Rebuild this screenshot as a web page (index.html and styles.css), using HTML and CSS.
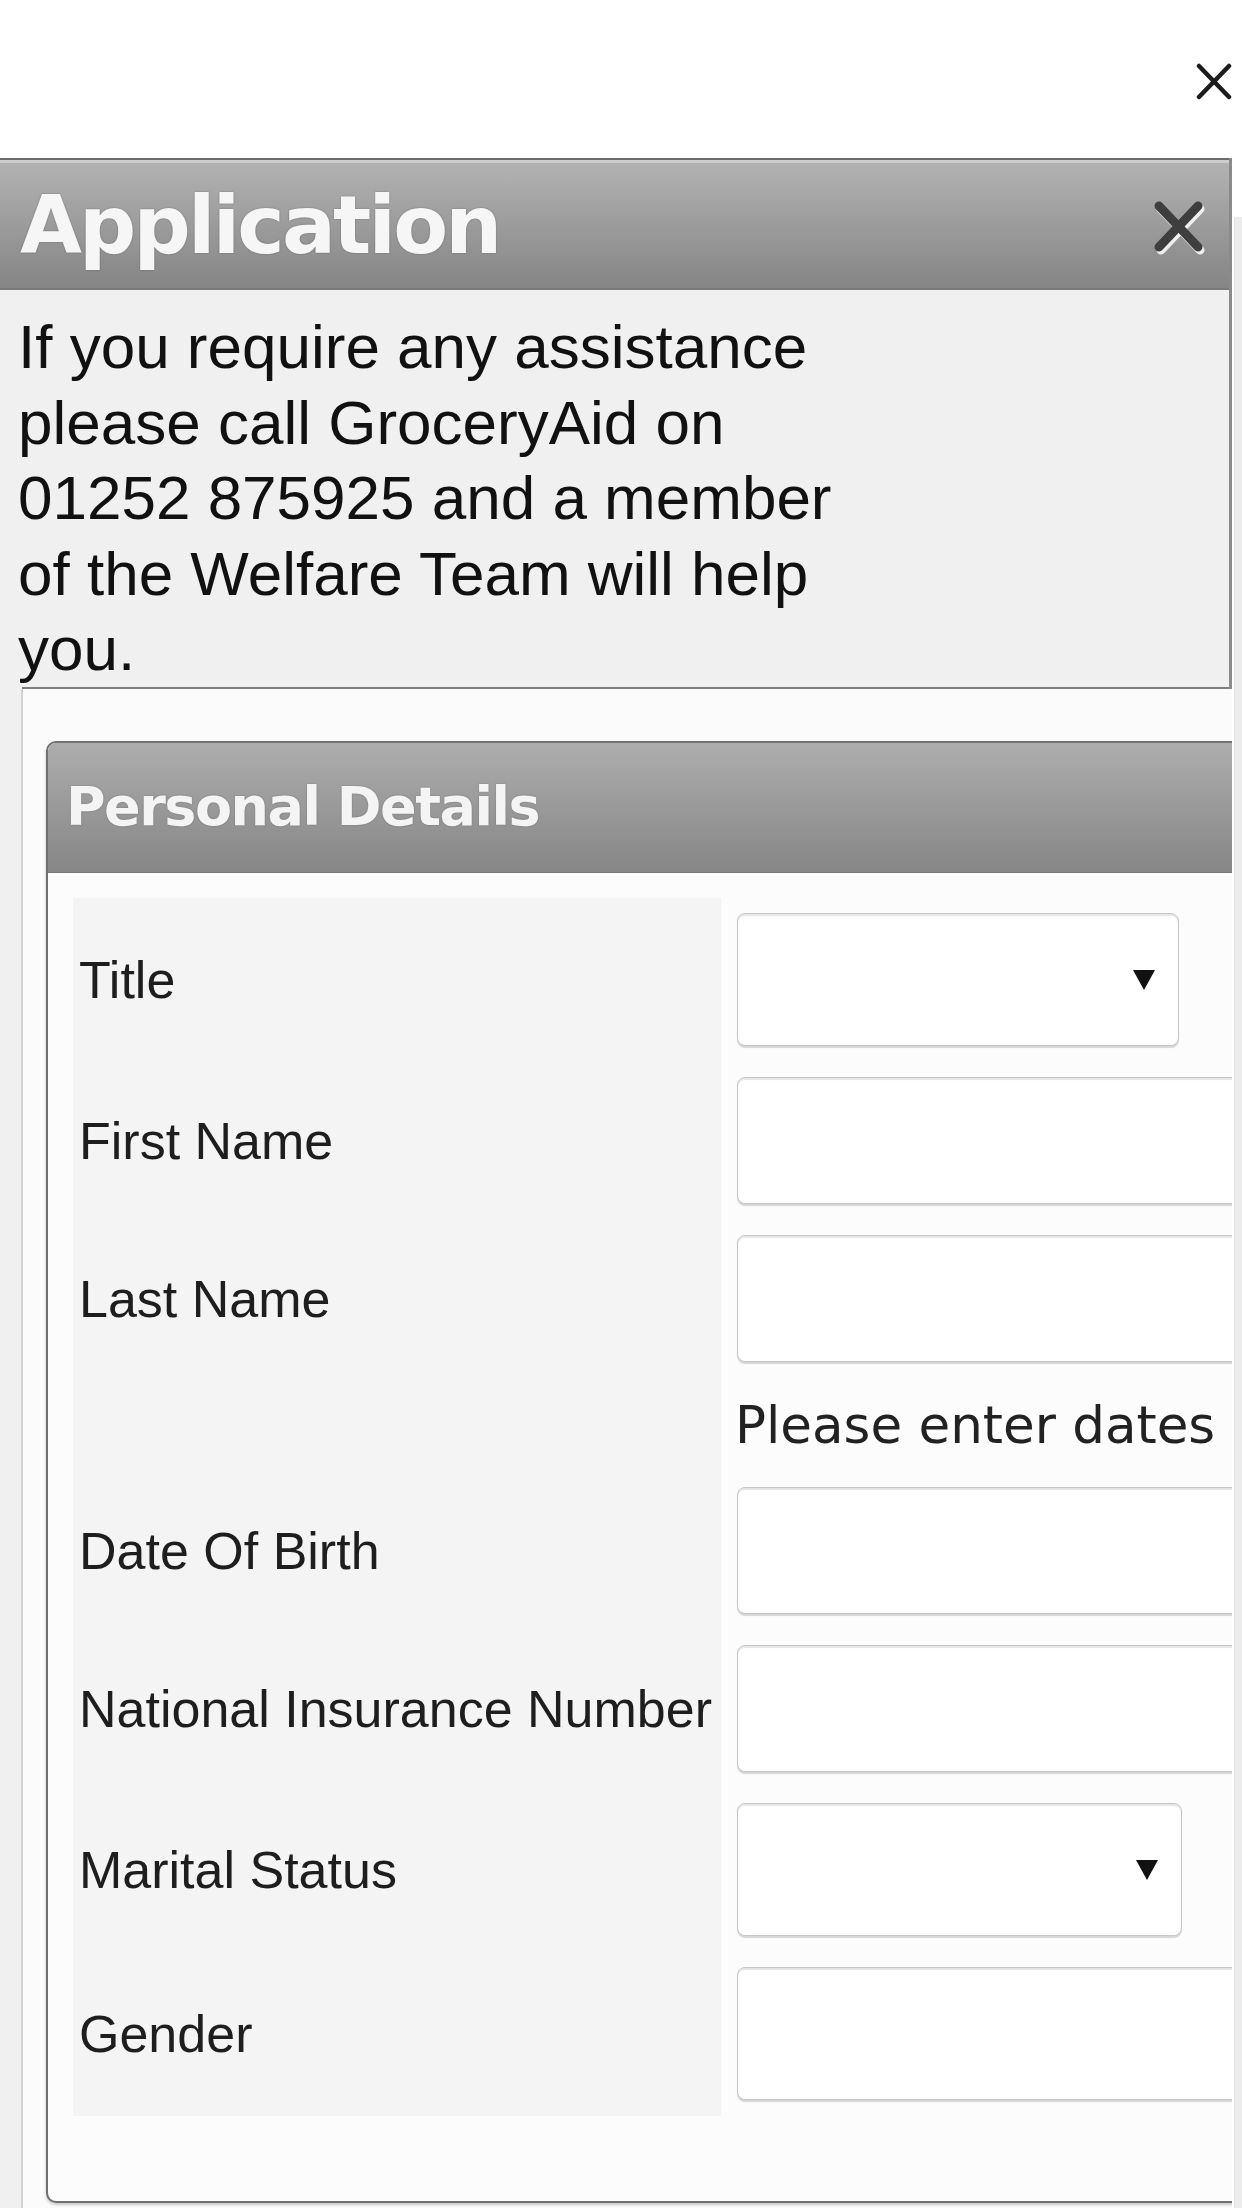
FILE: index.html
```html
<!DOCTYPE html>
<html lang="en">
<head>
<meta charset="utf-8">
<title>Application</title>
<link rel="stylesheet" href="styles.css">
</head>
<body>
<div class="topbar">
  <svg class="top-close" viewBox="0 0 36 37" aria-label="Close">
    <line x1="3" y1="3" x2="33" y2="34"/>
    <line x1="33" y1="3" x2="3" y2="34"/>
  </svg>
</div>
<div class="stage">
  <div class="main">
    <section class="dialog">
      <header class="dialog-head">
        <h1 class="dialog-title">Application</h1>
        <svg class="head-close" viewBox="0 0 53 55" aria-label="Close">
          <g class="hc-shadow">
            <line x1="8" y1="9" x2="47" y2="50"/>
            <line x1="47" y1="9" x2="8" y2="50"/>
          </g>
          <g class="hc-main">
            <line x1="6" y1="6" x2="45" y2="47"/>
            <line x1="45" y1="6" x2="6" y2="47"/>
          </g>
        </svg>
      </header>
      <div class="dialog-info">
        <p class="info-text">If you require any assistance please call GroceryAid on 01252 875925 and a member of the Welfare Team will help you.</p>
      </div>
    </section>
    <div class="content">
      <div class="fieldset">
        <div class="fs-head"><h2 class="fs-title">Personal Details</h2></div>
        <div class="form-grid">
          <div class="lbl">Title</div>
          <div class="fld"><div class="input select sel-title"><svg class="arrow" viewBox="0 0 22 20"><polygon points="0,0 22,0 11,20"/></svg></div></div>

          <div class="lbl">First Name</div>
          <div class="fld"><div class="input text-input"></div></div>

          <div class="lbl">Last Name</div>
          <div class="fld"><div class="input text-input"></div></div>

          <div class="lbl"></div>
          <div class="fld hint-fld">Please enter dates</div>

          <div class="lbl">Date Of Birth</div>
          <div class="fld"><div class="input text-input"></div></div>

          <div class="lbl">National Insurance Number</div>
          <div class="fld"><div class="input text-input"></div></div>

          <div class="lbl">Marital Status</div>
          <div class="fld"><div class="input select sel-marital"><svg class="arrow" viewBox="0 0 22 20"><polygon points="0,0 22,0 11,20"/></svg></div></div>

          <div class="lbl">Gender</div>
          <div class="fld"><div class="input select sel-gender"><svg class="arrow" viewBox="0 0 22 20"><polygon points="0,0 22,0 11,20"/></svg></div></div>
        </div>
      </div>
    </div>
  </div>
  <div class="rail"></div>
</div>
</body>
</html>
```

FILE: styles.css
```css
html, body {
  margin: 0;
  padding: 0;
}

body {
  width: 1242px;
  height: 2208px;
  overflow: hidden;
  background: #ffffff;
  font-family: "Liberation Sans", Arial, sans-serif;
}

.topbar {
  height: 158px;
  box-sizing: border-box;
  padding: 63px 10px 0 0;
  display: flex;
  justify-content: flex-end;
  align-items: flex-start;
}

.top-close {
  width: 36px;
  height: 37px;
  stroke: #1c1c1c;
  stroke-width: 4.5;
  stroke-linecap: round;
}

.stage {
  display: flex;
  align-items: flex-start;
  height: 2050px;
}

.main {
  width: 1232px;
  height: 2050px;
  background: #f0f0f0;
  overflow: hidden;
  flex: none;
}

.rail {
  width: 8px;
  margin-left: 2px;
  margin-top: 59px;
  align-self: stretch;
  background: #ececec;
  border-left: 1px solid #e2e2e2;
}

/* Application dialog */
.dialog {
  border-right: 3px solid #8a8a8a;
}

.dialog-head {
  height: 132px;
  box-sizing: border-box;
  border-top: 2px solid #6c6c6c;
  border-bottom: 2px solid #7a7a7a;
  background: linear-gradient(#b3b3b3, #858585);
  box-shadow: inset 0 3px 0 rgba(255, 255, 255, 0.35);
  display: flex;
  justify-content: space-between;
  align-items: flex-start;
  padding: 21px 23px 0 20px;
}

.dialog-title {
  margin: 0;
  font-family: "DejaVu Sans", Verdana, sans-serif;
  font-weight: bold;
  font-size: 80px;
  line-height: 90px;
  letter-spacing: -2.8px;
  color: #f6f6f6;
  text-shadow: 0 0 2px rgba(0, 0, 0, 0.3);
}

.head-close {
  width: 53px;
  height: 55px;
  margin-top: 19px;
  stroke-width: 9;
  stroke-linecap: round;
}

.hc-shadow {
  stroke: rgba(255, 255, 255, 0.85);
}

.hc-main {
  stroke: #3e3e3e;
}

.dialog-info {
  height: 399px;
  box-sizing: border-box;
  padding: 19px 0 0 18px;
  background:
    linear-gradient(#7e7e7e, #7e7e7e) 22px 100% / calc(100% - 22px) 2px no-repeat,
    #f0f0f0;
}

.info-text {
  margin: 0;
  max-width: 870px;
  font-size: 62px;
  line-height: 75.5px;
  color: #111111;
}

/* Personal details */
.content {
  margin-left: 21px;
  border-left: 2px solid #d2d2d2;
  background: #fbfbfb;
  height: 1519px;
  box-sizing: border-box;
  padding-top: 52px;
  overflow: hidden;
}

.fieldset {
  margin-left: 23px;
  width: 1250px;
  border: 2px solid #707070;
  border-radius: 10px 0 0 10px;
  background: #fcfcfc;
  box-shadow: 0 2px 3px rgba(0, 0, 0, 0.2);
}

.fs-head {
  height: 130px;
  box-sizing: border-box;
  background: linear-gradient(#adadad, #868686);
  border-bottom: 1px solid #777777;
  border-radius: 8px 0 0 0;
  padding: 34px 0 0 18px;
}

.fs-title {
  margin: 0;
  font-family: "DejaVu Sans", Verdana, sans-serif;
  font-weight: bold;
  font-size: 54px;
  line-height: 60px;
  letter-spacing: -1.5px;
  color: #f4f4f4;
  text-shadow: 0 0 2px rgba(0, 0, 0, 0.25);
}

.form-grid {
  display: grid;
  grid-template-columns: 648px 1fr;
  margin: 25px 0 85px 25px;
}

.lbl {
  background: #f4f4f4;
  display: flex;
  align-items: center;
  padding-left: 6px;
  font-size: 52px;
  color: #1e1e1e;
  white-space: nowrap;
}

.fld {
  padding: 15px 0 16px 16px;
}

.input {
  box-sizing: border-box;
  background: #ffffff;
  border: 1px solid #c6c6c6;
  border-radius: 8px;
  box-shadow: inset 0 2px 1px rgba(0, 0, 0, 0.1), 0 2px 1px rgba(0, 0, 0, 0.15);
}

.text-input {
  height: 127px;
  width: 560px;
}

.select {
  height: 133px;
  display: flex;
  justify-content: flex-end;
  align-items: center;
  padding-right: 23px;
}

.sel-title {
  width: 442px;
}

.sel-marital {
  width: 445px;
}

.sel-gender {
  width: 560px;
}

.arrow {
  width: 22px;
  height: 20px;
  fill: #111111;
}

.hint-fld {
  padding: 18px 0 18px 14px;
  font-family: "DejaVu Sans", Verdana, sans-serif;
  font-size: 51.5px;
  line-height: 58px;
  color: #222222;
  white-space: nowrap;
}
```
